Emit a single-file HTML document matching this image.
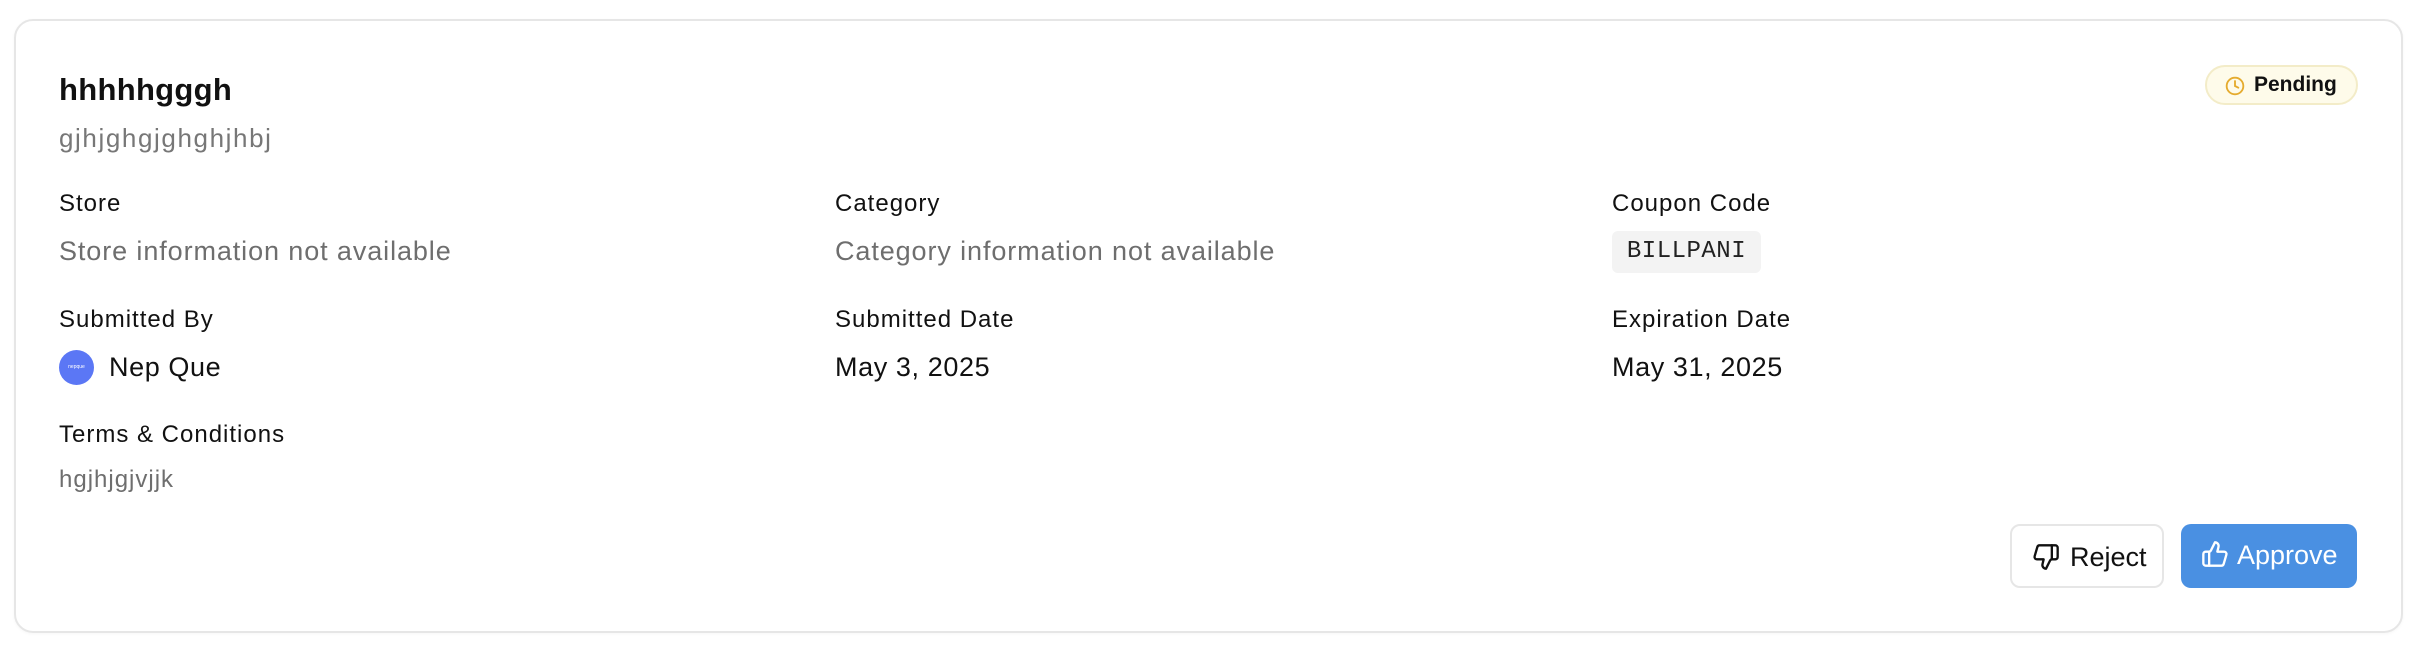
<!DOCTYPE html>
<html><head><meta charset="utf-8"><style>
*{margin:0;padding:0;box-sizing:border-box}
body{width:2430px;height:656px;background:#fff;font-family:"Liberation Sans",sans-serif;position:relative;overflow:hidden}
.card{position:absolute;left:14px;top:19px;width:2389px;height:614px;border:2px solid #e6e6e6;border-radius:19px;box-shadow:0 1px 3px rgba(0,0,0,0.04)}
.a{position:absolute;white-space:nowrap}
.t{font-size:31px;font-weight:700;color:#111;left:59px;top:72px;letter-spacing:0.3px}
.s{font-size:26px;color:#777;left:59px;top:121px;letter-spacing:1.6px}
.l{font-size:24px;color:#111;letter-spacing:1px}
.v{font-size:27px;color:#6e6e6e;letter-spacing:0.9px}
.d{font-size:27px;color:#111;letter-spacing:0.6px}
.code{left:1612px;top:231px;width:149px;height:42px;background:#f3f3f3;border-radius:6px;font-family:"Liberation Mono",monospace;font-size:24px;color:#222;line-height:42px;text-align:center;letter-spacing:0.5px}
.badge{left:2205px;top:65px;width:153px;height:40px;background:#fefbea;border:2px solid #f3ecc8;border-radius:20px;font-size:21px;font-weight:700;color:#111;line-height:36px;padding-left:47px}
.btn{top:524px;height:64px;border-radius:10px;font-size:27px;line-height:62px}
.rej{left:2010px;width:154px;border:2px solid #e6e6e6;color:#111;padding-left:58px}
.app{left:2181px;width:176px;background:#4a90e2;color:#fff;padding-left:56px}
</style></head><body>
<div class="card"></div>
<div class="a t">hhhhhgggh</div>
<div class="a s" style="top:123px">gjhjghgjghghjhbj</div>
<div class="a l" style="left:59px;top:190px">Store</div>
<div class="a l" style="left:835px;top:190px">Category</div>
<div class="a l" style="left:1612px;top:190px">Coupon Code</div>
<div class="a v" style="left:59px;top:236px">Store information not available</div>
<div class="a v" style="left:835px;top:236px">Category information not available</div>
<div class="a code">BILLPANI</div>
<div class="a l" style="left:59px;top:306px">Submitted By</div>
<div class="a l" style="left:835px;top:306px">Submitted Date</div>
<div class="a l" style="left:1612px;top:306px">Expiration Date</div>
<div class="a" style="left:59px;top:350px;width:35px;height:35px;border-radius:50%;background:#5b77f5;color:#fff;font-size:5px;text-align:center;line-height:35px">nepque</div>
<div class="a d" style="left:109px;top:352px">Nep Que</div>
<div class="a d" style="left:835px;top:352px">May 3, 2025</div>
<div class="a d" style="left:1612px;top:352px">May 31, 2025</div>
<div class="a l" style="left:59px;top:421px">Terms &amp; Conditions</div>
<div class="a v" style="left:59px;top:466px;font-size:24px;letter-spacing:1px">hgjhjgjvjjk</div>
<div class="a badge"><svg style="position:absolute;left:18px;top:9px" width="20" height="20" viewBox="0 0 24 24" fill="none" stroke="#e5ab2e" stroke-width="2.2" stroke-linecap="round"><circle cx="12" cy="12" r="10"/><path d="M12 6v6l4 2"/></svg>Pending</div>
<div class="a btn rej"><svg style="position:absolute;left:20px;top:17px" width="28" height="28" viewBox="0 0 24 24" fill="none" stroke="#111" stroke-width="2" stroke-linejoin="round" stroke-linecap="round"><path d="M17 14V2"/><path d="M9 18.12 10 14H4.17a2 2 0 0 1-1.92-2.56l2.33-8A2 2 0 0 1 6.5 2H20a2 2 0 0 1 2 2v8a2 2 0 0 1-2 2h-2.76a2 2 0 0 0-1.79 1.11L12 22a3.130 3.13 0 0 1-3-3.88Z"/></svg>Reject</div>
<div class="a btn app"><svg style="position:absolute;left:20px;top:16px" width="28" height="28" viewBox="0 0 24 24" fill="none" stroke="#fff" stroke-width="2" stroke-linejoin="round" stroke-linecap="round"><path d="M7 10v12"/><path d="M15 5.88 14 10h5.83a2 2 0 0 1 1.92 2.56l-2.33 8A2 2 0 0 1 17.5 22H4a2 2 0 0 1-2-2v-8a2 2 0 0 1 2-2h2.76a2 2 0 0 0 1.79-1.11L12 2a3.13 3.13 0 0 1 3 3.88Z"/></svg>Approve</div>
</body></html>
